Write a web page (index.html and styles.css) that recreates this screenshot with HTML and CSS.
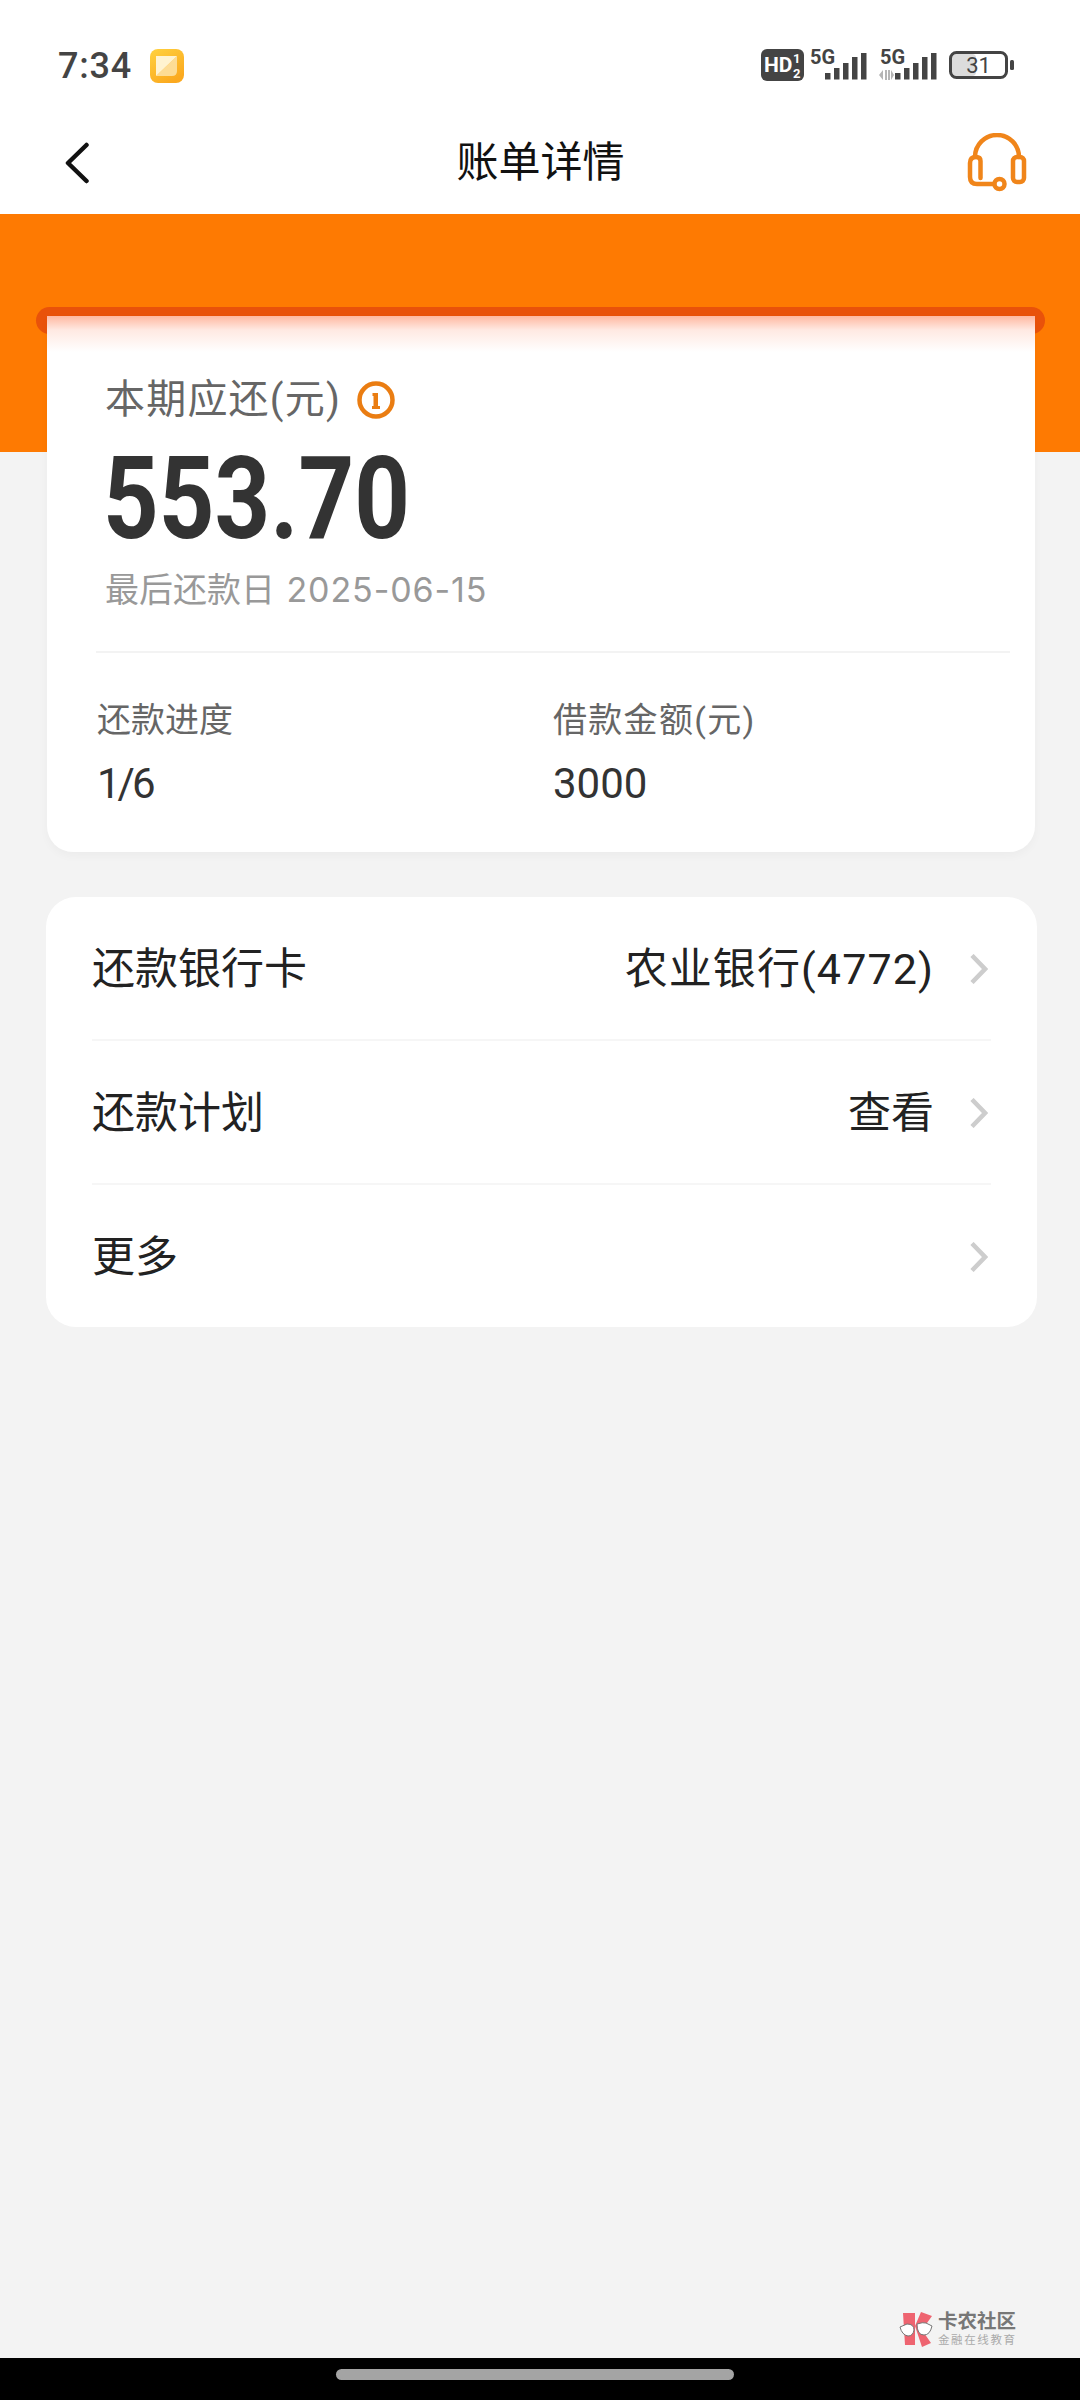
FILE: index.html
```html
<!DOCTYPE html>
<html lang="zh-CN">
<head>
<meta charset="utf-8">
<title>账单详情</title>
<link rel="stylesheet" href="styles.css">
</head>
<body>
<div class="page">
  <header class="top">
    <div class="status">
      <div class="status-left">
        <span class="time">7:34</span>
        <svg class="note" viewBox="0 0 34 34">
          <defs>
            <linearGradient id="noteBg" x1="0" y1="0" x2="0.6" y2="1"><stop offset="0" stop-color="#ffd23f"/><stop offset="1" stop-color="#fba91f"/></linearGradient>
          </defs>
          <rect width="34" height="34" rx="8" fill="url(#noteBg)"/>
          <path d="M6 27 L27 7 L27 22 Q27 27 22 27 Z" fill="#fddc95"/>
          <path d="M6 27 L6 7 L27 7 Z" fill="#fff3d0"/>
        </svg>
      </div>
      <div class="status-right">
        <svg class="hd" viewBox="0 0 43 32">
          <rect width="43" height="32" rx="6" fill="#444"/>
          <text class="hd-t" x="3" y="23">HD</text>
          <text class="hd-n" x="32" y="14">1</text>
          <text class="hd-n" x="32" y="29">2</text>
        </svg>
        <svg class="sig" viewBox="0 -6 60 38">
          <text class="sig-t" x="0" y="15">5G</text>
          <path class="bars" d="M15 24h5.500v6.500H15zM24 19h5.500v11.500H24zM33 14h5.500v16.500H33zM42 8h5.500v22.500H42zM51 4h5.500v26.500H51z"/>
        </svg>
        <svg class="sig sig2" viewBox="0 -6 60 38">
          <text class="sig-t" x="2" y="15">5G</text>
          <path class="arrows" d="M5 21 1 26l4 5zM7 21h2v10H7zM10 21h2v10h-2zM13 21l3 5-3 5z"/>
          <path class="bars" d="M17 24h5.500v6.500H17zM26 19h5.500v11.500H26zM35 14h5.500v16.500H35zM44 8h5.500v22.500H44zM53 4h5.500v26.500H53z"/>
        </svg>
        <svg class="batt" viewBox="0 -2 66 30">
          <rect class="batt-fill" x="3" y="3" width="24" height="22" rx="4"/>
          <rect class="batt-box" x="1.500" y="1.500" width="56" height="25" rx="6"/>
          <rect class="batt-nub" x="61" y="9" width="4" height="10" rx="1.500"/>
          <text class="batt-t" x="29.500" y="22">31</text>
        </svg>
      </div>
    </div>
    <nav class="nav">
      <svg class="back" viewBox="0 0 24 42"><path d="M21.500 3 3 21l18.500 18"/></svg>
      <h1 class="title">账单详情</h1>
      <svg class="headset" viewBox="0 0 60 60">
        <path d="M8 24A22 22 0 0 1 52 24"/>
        <path d="M13.500 45V28Q13.500 24 9 24Q3 24 3 30V44Q3 51 10 51H27"/>
        <rect x="46" y="24" width="11" height="25" rx="4"/>
        <circle cx="32.500" cy="51" r="5"/>
      </svg>
    </nav>
  </header>

  <div class="hero"><div class="slot"></div></div>

  <main class="content">
    <section class="bill">
      <div class="bill-head">
        <div class="due-label">
          <span class="due-text">本期应还(元)</span>
          <svg class="info" viewBox="0 0 38 38">
            <circle cx="19" cy="19" r="16.500"/>
            <path class="info-i" d="M15.500 12h5.500v14h-4.500v-11h-1zM15 25h8v3h-8z"/>
          </svg>
        </div>
        <div class="amount">553.70</div>
        <div class="due-date">最后还款日 <span class="date-num">2025-06-15</span></div>
      </div>
      <div class="divider"></div>
      <div class="stats">
        <div class="stat">
          <div class="stat-label">还款进度</div>
          <div class="stat-value tight">1/6</div>
        </div>
        <div class="stat">
          <div class="stat-label wide">借款金额(元)</div>
          <div class="stat-value">3000</div>
        </div>
      </div>
    </section>

    <section class="menu">
      <div class="row">
        <span class="row-label">还款银行卡</span>
        <span class="row-value wide">农业银行(4772)</span>
        <svg class="chev" viewBox="0 0 18 30"><path d="M2 1.500 15 15 2 28.500"/></svg>
      </div>
      <div class="row">
        <span class="row-label">还款计划</span>
        <span class="row-value">查看</span>
        <svg class="chev" viewBox="0 0 18 30"><path d="M2 1.500 15 15 2 28.500"/></svg>
      </div>
      <div class="row">
        <span class="row-label">更多</span>
        <svg class="chev" viewBox="0 0 18 30"><path d="M2 1.500 15 15 2 28.500"/></svg>
      </div>
    </section>
  </main>

  <div class="watermark">
    <svg class="wm-logo" viewBox="0 0 34 36">
      <path class="wm-red" d="M4 2h12v32H6z"/>
      <path class="wm-red" d="M16 15 22 1l11 4-10 14 9 13-9 4z"/>
      <path class="wm-glass" d="M1 16l7-3q7 0 7 6q-1 6-6 6q-6-1-8-9zM18 13q6-2 9-1l6 3q-2 9-8 9q-7 0-7-11z"/>
    </svg>
    <div class="wm-text">
      <div class="wm-name">卡农社区</div>
      <div class="wm-sub">金融在线教育</div>
    </div>
  </div>

  <div class="navbar"><div class="pill"></div></div>
</div>
</body>
</html>
```

FILE: styles.css
```css
* { box-sizing: border-box; }
html, body { margin: 0; padding: 0; }
body {
  width: 1080px;
  height: 2400px;
  overflow: hidden;
  font-family: Roboto, "Noto Sans CJK SC", sans-serif;
  background: #f3f3f3;
}
.page {
  position: relative;
  width: 1080px;
  height: 2400px;
  display: flex;
  flex-direction: column;
}

/* top */
.top { background: #fff; height: 214px; flex: none; }
.status {
  height: 132px;
  padding: 0 65px 0 58px;
  display: flex;
  align-items: center;
  justify-content: space-between;
}
.status-left { display: flex; align-items: center; gap: 18px; }
.time { font-size: 36px; line-height: 40px; font-weight: 500; color: #444; letter-spacing: .8px; }
.note { width: 34px; height: 34px; display: block; }
.status-right { display: flex; align-items: flex-end; margin-bottom: 8px; }
.hd { width: 43px; height: 32px; display: block; }
.hd-t { font: 700 21px Roboto, sans-serif; fill: #fff; }
.hd-n { font: 700 13px Roboto, sans-serif; fill: #fff; }
.sig { width: 60px; height: 38px; display: block; margin-left: 6px; }
.sig2 { margin-left: 8px; }
.sig-t { font: 700 20px Roboto, sans-serif; fill: #444; }
.bars { fill: #444; }
.arrows { fill: #b5b5b5; }
.batt { width: 66px; height: 30px; display: block; margin-left: 11px; margin-bottom: 2px; }
.batt-fill { fill: #dcdcdc; }
.batt-box { fill: none; stroke: #444; stroke-width: 3; }
.batt-nub { fill: #444; }
.batt-t { font: 400 22px Roboto, sans-serif; fill: #444; text-anchor: middle; }

.nav {
  height: 62px;
  padding: 0 53px 0 65px;
  display: grid;
  grid-template-columns: 1fr auto 1fr;
  align-items: center;
}
.back { width: 24px; height: 42px; display: block; fill: none; stroke: #111; stroke-width: 4.500; stroke-linecap: round; stroke-linejoin: round; }
.title { margin: 0 0 0 -11px; font-size: 42px; line-height: 50px; font-weight: 400; color: #111; }
.headset { width: 60px; height: 60px; display: block; justify-self: end; fill: none; stroke: #f0851a; stroke-width: 4.500; stroke-linecap: round; }

/* hero */
.hero { position: relative; height: 238px; flex: none; background: #fe7a02; }
.slot {
  position: absolute;
  left: 36px;
  right: 35px;
  top: 93px;
  height: 27px;
  border-radius: 14px;
  background: #e9520a;
}

/* content */
.content {
  position: relative;
  margin-top: -136px;
  display: flex;
  flex-direction: column;
  gap: 45px;
}
.bill {
  height: 536px;
  margin: 0 45px 0 47px;
  padding-top: 64px;
  background: linear-gradient(to bottom, #ffb8a0 0, #ffe9e2 14px, #fff 36px);
  border-radius: 0 0 26px 26px;
  box-shadow: 0 4px 10px rgba(0, 0, 0, .03);
}
.bill-head { padding-left: 58px; }
.due-label {
  display: flex;
  align-items: center;
  gap: 16px;
  font-size: 40px;
  line-height: 40px;
  color: #666;
}
.due-text { letter-spacing: 1.200px; }
.info { width: 38px; height: 38px; display: block; fill: none; stroke: #ea7d12; stroke-width: 4.500; }
.info-i { fill: #ea7d12; stroke: none; }
.amount {
  margin-top: 24px;
  margin-left: -2px;
  font-size: 115px;
  line-height: 110px;
  font-weight: 700;
  color: #333;
  transform: scaleX(.845);
  transform-origin: left center;
}
.due-date { margin-top: 16px; font-size: 34px; line-height: 40px; color: #999; }
.date-num { font-family: Inter, Roboto, sans-serif; margin-left: 3px; letter-spacing: .9px; }
.divider { height: 2px; margin: 41px 25px 0 49px; background: #f3f3f3; }
.stats {
  margin-top: 47px;
  padding-left: 50px;
  display: grid;
  grid-template-columns: 456px 1fr;
}
.stat-label { font-size: 34px; line-height: 40px; color: #666; }
.stat-label.wide { letter-spacing: 1.300px; }
.stat-value { margin-top: 20px; font-size: 42px; line-height: 48px; color: #333; }
.stat-value.tight { letter-spacing: -3px; }

.menu {
  margin: 0 43px 0 46px;
  padding: 0 46px;
  background: #fff;
  border-radius: 30px;
}
.row {
  height: 144px;
  padding-top: 2px;
  display: flex;
  align-items: center;
  border-top: 2px solid #f6f6f6;
}
.row:first-child { height: 142px; border-top: 0; }
.row-label { flex: 1; font-size: 43px; line-height: 50px; color: #222; }
.row-value { font-size: 43px; line-height: 50px; color: #222; }
.row-value.wide { letter-spacing: 1.100px; }
.chev { width: 18px; height: 30px; margin: 0 3px 0 36px; display: block; fill: none; stroke: #cdcdcd; stroke-width: 4.500; }

/* watermark */
.watermark {
  position: absolute;
  left: 899px;
  top: 2311px;
  display: flex;
  align-items: center;
  gap: 5px;
}
.wm-logo { width: 34px; height: 36px; display: block; }
.wm-red { fill: #ee6470; }
.wm-glass { fill: #fff; stroke: #777; stroke-width: 1; }
.wm-name { font-size: 19.500px; line-height: 22px; font-weight: 700; color: #777; white-space: nowrap; }
.wm-sub { font-size: 11.500px; line-height: 14px; color: #aaa; letter-spacing: 1.600px; white-space: nowrap; }

/* nav bar */
.navbar {
  margin-top: auto;
  height: 42px;
  background: #000;
  display: flex;
  justify-content: center;
  padding-top: 11px;
}
.pill { width: 398px; height: 11px; margin-right: 11px; border-radius: 6px; background: #a4a4a4; }
```
